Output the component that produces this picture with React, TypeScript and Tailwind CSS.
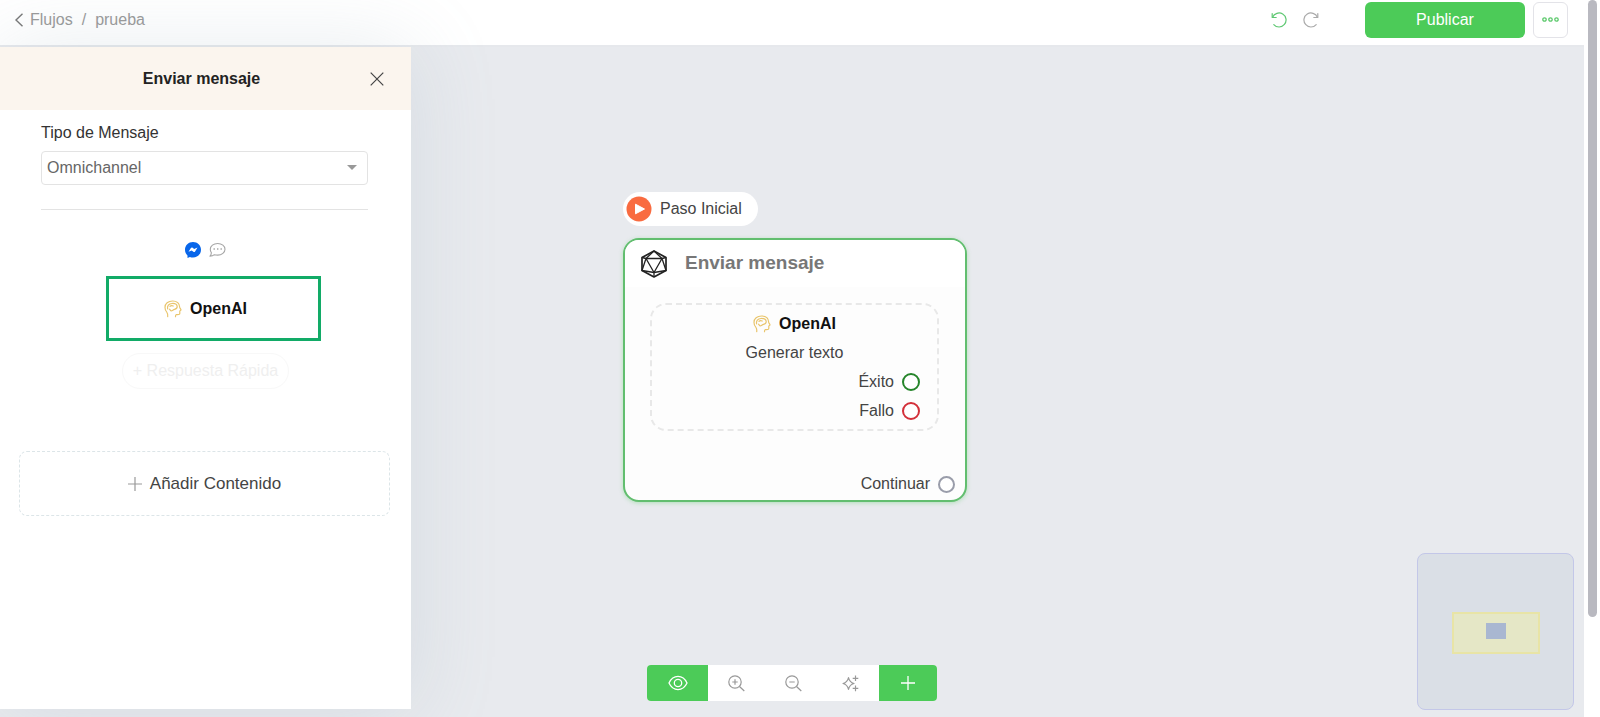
import type { ReactNode } from 'react';

function HeadIcon() {
  return (
    <svg viewBox="0 0 18 18" className="h-[18px] w-[18px] shrink-0" fill="none" stroke="#e9c56c" strokeWidth="1.200" strokeLinecap="round" strokeLinejoin="round">
      <path d="M3.700 16.700c.3-2 0-3.400-1-4.700C1.500 10.500 1 9.200 1 7.400 1 3.700 4.100 1 8.600 1c4.600 0 6.900 2.600 7.100 6.200 0 .8 1.300 2.100 1.300 2.800 0 .5-1.200.5-1.200 1 0 .6.200 2.600-.3 3.200-.7.700-2.500.3-3.400.5-.5.200-.6 1-.6 2" />
      <path d="M3.600 9C3 6 4.700 3.700 8 3.500c3.100-.2 5 1.100 5.200 3 .1 1.700-1.400 2.500-2.700 2.800-1.400.3-2.300 1.700-3.400 1.500-1-.2-.8-1.300-1.600-1.600" />
      <path d="M6 6.300c1-.9 2.100-.9 3.200-.3" />
    </svg>
  );
}

function MessengerIcon() {
  return (
    <svg viewBox="0 0 16 16" className="h-4 w-4">
      <path d="M8 0C3.500 0 0 3.300 0 7.700c0 2.300 1 4.300 2.500 5.700V16l2.400-1.100c1 .4 2 .5 3.100.5 4.500 0 8-3.300 8-7.700S12.500 0 8 0z" fill="#0866ea" />
      <path d="M3.500 9.800l2.400-3.700c.4-.6 1.100-.7 1.700-.3l1.600 1.300 3.300-1.500-2.400 3.800c-.4.600-1.200.7-1.700.3L6.700 8.400z" fill="#fff" />
    </svg>
  );
}

function ChatIcon() {
  return (
    <svg viewBox="0 0 17 16" className="h-4 w-[17px]" fill="none" stroke="#a6a6a6" strokeWidth="1.100" strokeLinejoin="round">
      <path d="M8.700 1.500C4.500 1.500 1.300 3.900 1.300 7.200c0 1.600.5 2.600 1.100 3.600-.1 1.300-.6 2.500-1.500 3.300 1.700 0 3.300-.4 4.500-1.400 1 .3 2.100.4 3.300.4 4.100 0 7.300-2.600 7.300-5.900s-3.200-5.700-7.300-5.700z" />
      <path d="M4.500 7h1.400M8 7h1.400M11.500 7h1.400" strokeWidth="1.500" />
    </svg>
  );
}

function PolyhedronIcon() {
  return (
    <svg viewBox="0 0 26 28" className="h-7 w-[26px]" fill="none" stroke="#222" strokeWidth="1.300" strokeLinejoin="round">
      <path d="M13 1l12 6.500v13L13 27 1 20.500v-13z" strokeWidth="1.700" />
      <path d="M13 5.500L5 19.500h16L13 5.500z" transform="rotate(180 13 14)" />
      <path d="M5 8.500L13 1l8 7.500M1 7.500l4 1L1 20.500l12 2 12-2L21 8.500l4-1M13 22.500V27" />
    </svg>
  );
}

function UndoIcon({ className }: { className: string }) {
  return (
    <svg viewBox="0 0 16 16" className={className} fill="none" stroke="currentColor" strokeWidth="1.200" strokeLinecap="round" strokeLinejoin="round">
      <path d="M1.200 1.500v4h4" />
      <path d="M1.600 5.300A7 7 0 1 1 2.800 12.600" />
    </svg>
  );
}

const tools: { label: string; icon: ReactNode }[] = [
  {
    label: 'Acercar',
    icon: (
      <>
        <circle cx="7" cy="7" r="6.200" />
        <path d="M11.500 11.500l4.800 4.500M4.300 7h5.400M7 4.300v5.400" />
      </>
    ),
  },
  {
    label: 'Alejar',
    icon: (
      <>
        <circle cx="7" cy="7" r="6.200" />
        <path d="M11.500 11.500l4.800 4.500M4.300 7h5.400" />
      </>
    ),
  },
  {
    label: 'Ordenar',
    icon: <path d="M6.500 2.700c.8 3.600 2.200 5 5.500 5.800-3.300.8-4.700 2.200-5.500 5.800-.8-3.600-2.200-5-5.500-5.800 3.300-.8 4.700-2.200 5.500-5.800zM13.500.5v5.600M10.700 3.300h5.600M13.500 10.600v5.600M10.700 13.400h5.600" />,
  },
];

const outputs = [
  { label: 'Éxito', ring: 'border-[#26852b]' },
  { label: 'Fallo', ring: 'border-[#d3303a]' },
];

function Header() {
  return (
    <header className="flex h-[47px] items-center justify-between border-b-2 border-[#e6e8ec] bg-white pb-[6px] pl-[14px] pr-4">
      <nav className="flex items-center text-[#999]">
        <a href="#flujos" className="flex items-center gap-[6px]">
          <svg viewBox="0 0 10 14" className="h-[14px] w-[10px]" fill="none" stroke="#777" strokeWidth="1.400">
            <path d="M8.500.8L2 7l6.500 6.200" />
          </svg>
          Flujos
        </a>
        <span className="px-[9px]">/</span>
        <span>prueba</span>
      </nav>
      <div className="flex items-center">
        <button aria-label="Deshacer" className="mr-4 text-[#5fc873]">
          <UndoIcon className="h-4 w-4" />
        </button>
        <button aria-label="Rehacer" className="mr-[46px] text-[#aaa]">
          <UndoIcon className="h-4 w-4 -scale-x-100" />
        </button>
        <button className="mr-2 h-9 w-40 rounded-md bg-[#4ccb58] text-white">Publicar</button>
        <button aria-label="Más opciones" className="flex h-9 w-[35px] items-center justify-center rounded-md border border-[#e3e3e8] bg-white">
          <svg viewBox="0 0 17 5" className="h-[5px] w-[17px]" fill="none" stroke="#5cc96c" strokeWidth="1.300">
            <circle cx="2.500" cy="2.500" r="1.700" />
            <circle cx="8.500" cy="2.500" r="1.700" />
            <circle cx="14.500" cy="2.500" r="1.700" />
          </svg>
        </button>
      </div>
    </header>
  );
}

function SidePanel() {
  return (
    <aside className="relative z-10 mb-2 flex w-[411px] shrink-0 flex-col bg-white shadow-[0_0_80px_rgba(140,165,180,0.2)]">
      <div className="flex h-[63px] items-center bg-[#fbf5ee] pl-9 pr-6">
        <h2 className="flex-1 text-center font-bold text-[#222]">Enviar mensaje</h2>
        <button aria-label="Cerrar" className="flex w-5 justify-center">
          <svg viewBox="0 0 14 14" className="h-[14px] w-[14px]" fill="none" stroke="#444" strokeWidth="1.200">
            <path d="M.7.7l12.600 12.600M13.300.7L.7 13.300" />
          </svg>
        </button>
      </div>

      <div className="ml-[41px] mr-[43px] border-b border-[#e3e3e3] pb-6 pt-[11px]">
        <label htmlFor="tipo" className="block leading-6 text-[#333]">Tipo de Mensaje</label>
        <div className="relative mt-[6px]">
          <select id="tipo" className="h-[34px] w-full appearance-none rounded border border-[#e3e3e3] bg-white px-[5px] text-[#666]">
            <option>Omnichannel</option>
          </select>
          <svg viewBox="0 0 10 5" className="pointer-events-none absolute right-[11px] top-[14px] h-[5px] w-[10px]" fill="#999">
            <path d="M0 0h10L5 5z" />
          </svg>
        </div>
      </div>

      <div className="flex flex-col items-center pt-8">
        <div className="flex items-center gap-2">
          <MessengerIcon />
          <ChatIcon />
        </div>
        <button className="ml-4 mt-[18px] flex h-[65px] w-[215px] items-center justify-center gap-2 border-[3px] border-[#12ab67] pr-4 font-bold text-[#111]">
          <HeadIcon />
          OpenAI
        </button>
        <button className="mt-3 h-9 rounded-[18px] border border-[#f8f8f8] px-[10px] text-[#efefef]">+ Respuesta Rápida</button>
      </div>

      <button className="ml-[19px] mr-[21px] mt-[62px] flex h-[65px] items-center justify-center gap-2 rounded-lg border border-dashed border-[#dce5e8] text-[17px] text-[#444]">
        <svg viewBox="0 0 14 14" className="h-[14px] w-[14px]" stroke="#999" strokeWidth="1.200">
          <path d="M7 0v14M0 7h14" />
        </svg>
        Añadir Contenido
      </button>
    </aside>
  );
}

function MessageNode() {
  return (
    <div className="absolute left-[212px] top-[145px] w-[344px] text-[#444]">
      <div className="flex h-[34px] w-[135px] items-center gap-2 rounded-full bg-white pl-[3px]">
        <svg viewBox="0 0 26 26" className="h-[26px] w-[26px]">
          <circle cx="13" cy="13" r="12.500" fill="#f96b40" />
          <path d="M9.500 8.200v9.600l9-4.800z" fill="#fff" stroke="#fff" strokeWidth="1" strokeLinejoin="round" />
        </svg>
        <span>Paso Inicial</span>
      </div>

      <div className="mt-3 flex h-[264px] flex-col overflow-hidden rounded-2xl border-2 border-[#62be6f] bg-[#fdfdfd] shadow-[0_1px_4px_rgba(76,203,88,0.35)]">
        <div className="flex h-[47px] shrink-0 items-center gap-[18px] bg-white pl-4">
          <PolyhedronIcon />
          <h3 className="text-[19px] font-bold text-[#777]">Enviar mensaje</h3>
        </div>
        <div className="ml-[25px] mr-[26px] mt-4 flex h-32 flex-col rounded-2xl border-2 border-dashed border-[#e8e8e8] pt-1">
          <div className="flex h-[29px] items-center justify-center gap-2 font-bold text-[#111]">
            <HeadIcon />
            OpenAI
          </div>
          <p className="h-[29px] text-center leading-[29px]">Generar texto</p>
          {outputs.map((output) => (
            <div key={output.label} className="flex h-[29px] items-center justify-end gap-2 pr-[17px]">
              {output.label}
              <span className={`h-[18px] w-[18px] rounded-full border-2 bg-white ${output.ring}`} />
            </div>
          ))}
        </div>
        <div className="mt-auto flex items-center justify-end gap-2 pb-1 pr-[10px]">
          Continuar
          <span className="h-[17px] w-[17px] rounded-full border-2 border-[#9a9daa] bg-white" />
        </div>
      </div>
    </div>
  );
}

function Toolbar() {
  return (
    <div className="absolute bottom-4 left-1/2 z-20 flex h-9 -translate-x-1/2 overflow-hidden rounded bg-white text-[#999]">
      <button aria-label="Vista previa" className="flex w-[61px] items-center justify-center bg-[#4ccb58] text-white">
        <svg viewBox="0 0 20 16" className="h-4 w-5" fill="none" stroke="currentColor" strokeWidth="1.300">
          <path d="M1 8c2-4.300 5-6.600 9-6.600S17 3.700 19 8c-2 4.300-5 6.600-9 6.600S3 12.300 1 8z" />
          <circle cx="10" cy="8" r="3.700" />
        </svg>
      </button>
      {tools.map((tool) => (
        <button key={tool.label} aria-label={tool.label} className="flex w-[57px] items-center justify-center">
          <svg viewBox="0 0 17 17" className="h-[17px] w-[17px]" fill="none" stroke="currentColor" strokeWidth="1.200" strokeLinejoin="round">
            {tool.icon}
          </svg>
        </button>
      ))}
      <button aria-label="Añadir" className="flex w-[58px] items-center justify-center bg-[#4ccb58] text-white">
        <svg viewBox="0 0 14 14" className="h-[14px] w-[14px]" stroke="currentColor" strokeWidth="1.300">
          <path d="M7 0v14M0 7h14" />
        </svg>
      </button>
    </div>
  );
}

function MiniMap() {
  return (
    <div className="absolute bottom-[7px] right-[10px] h-[157px] w-[157px] rounded-lg border border-[#c3c7e8] bg-[#dadfe6]">
      <div className="absolute left-[34px] top-[58px] h-[42px] w-[88px] border-2 border-[#e8e4a6] bg-[#e5e7c6]">
        <div className="absolute left-8 top-[9px] h-4 w-5 bg-[#a9b7d1]" />
      </div>
    </div>
  );
}

export default function App() {
  return (
    <div className="flex h-screen bg-white font-['Liberation_Sans',Arial,sans-serif] text-base">
      <div className="relative flex min-w-0 flex-1 flex-col overflow-hidden">
        <Header />
        <div className="flex min-h-0 flex-1 bg-[#e8eaee]">
          <SidePanel />
          <main className="relative flex-1">
            <MessageNode />
            <MiniMap />
          </main>
        </div>
        <Toolbar />
      </div>
      <div className="flex w-4 shrink-0 justify-center bg-white">
        <div className="h-[86%] w-[9px] rounded-full bg-[#b9b9c0]" />
      </div>
    </div>
  );
}
